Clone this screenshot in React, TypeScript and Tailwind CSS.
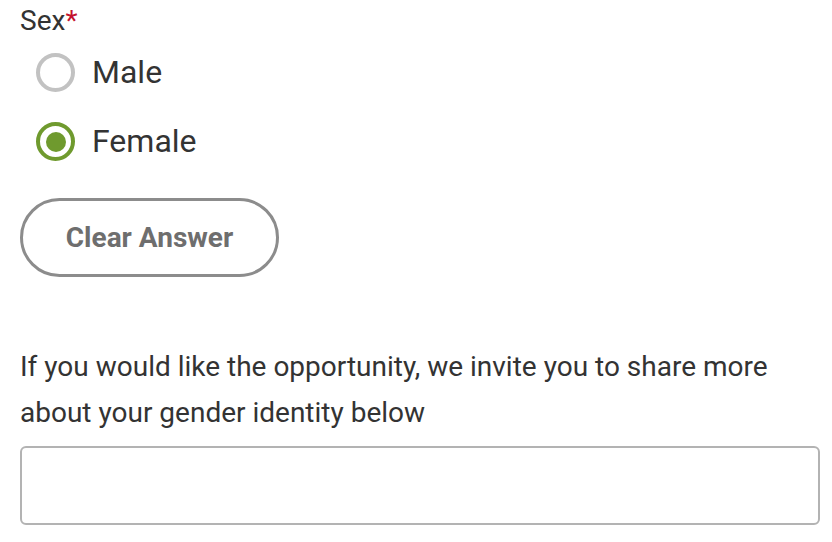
import { useState } from 'react'

const OPTIONS = ['Male', 'Female']

export default function App() {
  const [sex, setSex] = useState<string | null>('Female')
  const [identity, setIdentity] = useState('')

  return (
    <div className="min-h-screen bg-white pl-5 pr-3 text-[#333] font-['Roboto','Liberation_Sans',sans-serif]">
      <div className="pt-[3px] text-[28px] leading-[36px]">
        Sex<span className="text-[#c4122f]">*</span>
      </div>

      <div className="mt-[14px] flex flex-col gap-[30px] pl-4">
        {OPTIONS.map(o => (
          <label key={o} className="flex items-center gap-[17px] cursor-pointer" onClick={() => setSex(o)}>
            {sex === o ? (
              <span className="w-[39px] h-[39px] rounded-full border-[4px] border-[#6f9a2e] flex items-center justify-center">
                <span className="w-[20px] h-[20px] rounded-full bg-[#6f9a2e]" />
              </span>
            ) : (
              <span className="w-[39px] h-[39px] rounded-full border-[4px] border-[#c2c2c2]" />
            )}
            <span className="text-[32px] leading-[39px]">{o}</span>
          </label>
        ))}
      </div>

      <button type="button" onClick={() => setSex(null)}
        className="mt-[37px] w-[259px] h-[79px] rounded-full border-[3px] border-[#8c8c8c] text-[28px] font-bold text-[#6e6e6e] cursor-pointer">
        Clear Answer
      </button>

      <p className="mt-[67px] text-[28px] leading-[46px] max-w-[790px]">
        If you would like the opportunity, we invite you to share more about your gender identity below
      </p>

      <input value={identity} onChange={e => setIdentity(e.target.value)}
        className="mt-[10px] block w-[800px] h-[79px] rounded-[6px] border-2 border-[#b3b3b3] px-3 text-[26px] focus:outline-none" />
    </div>
  )
}
